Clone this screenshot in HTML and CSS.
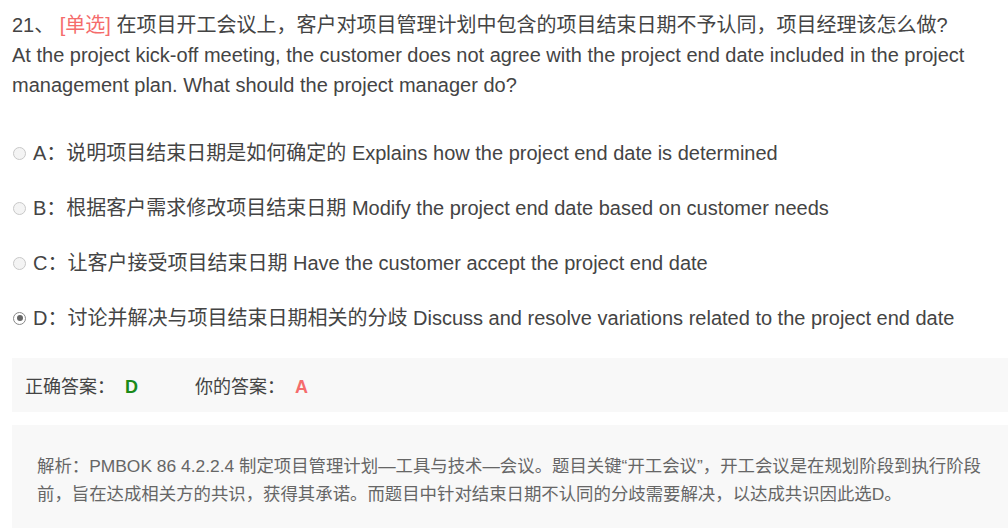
FILE: index.html
```html
<!DOCTYPE html>
<html lang="zh">
<head>
<meta charset="utf-8">
<link rel="stylesheet" href="styles.css">
</head>
<body>
<div class="page">
  <div class="question">
    <span class="num">21、</span> <span class="tag">[单选]</span> 在项目开工会议上，客户对项目管理计划中包含的项目结束日期不予认同，项目经理该怎么做?<br>At the project kick-off meeting, the customer does not agree with the project end date included in the project management plan. What should the project manager do?
  </div>
  <div class="options">
    <label class="option"><span class="radio"></span>A：说明项目结束日期是如何确定的 Explains how the project end date is determined</label>
    <label class="option"><span class="radio"></span>B：根据客户需求修改项目结束日期 Modify the project end date based on customer needs</label>
    <label class="option"><span class="radio"></span>C：让客户接受项目结束日期 Have the customer accept the project end date</label>
    <label class="option"><span class="radio checked"></span>D：讨论并解决与项目结束日期相关的分歧 Discuss and resolve variations related to the project end date</label>
  </div>
  <div class="answer">
    <span class="ans-item">正确答案：<b class="right">D</b></span>
    <span class="ans-item">你的答案：<b class="wrong">A</b></span>
  </div>
  <div class="analysis">
    解析：PMBOK 86 4.2.2.4 制定项目管理计划—工具与技术—会议。题目关键“开工会议”，开工会议是在规划阶段到执行阶段前，旨在达成相关方的共识，获得其承诺。而题目中针对结束日期不认同的分歧需要解决，以达成共识因此选D。
  </div>
</div>
</body>
</html>
```

FILE: styles.css
```css
html, body {
  margin: 0;
  padding: 0;
  background: #fff;
}
body {
  font-family: "Liberation Sans", Arial, "Noto Sans CJK SC", sans-serif;
  color: #444;
}
.page {
  padding: 10px 0 0 12px;
}
.question {
  font-size: 20px;
  line-height: 30px;
  padding-right: 30px;
}
.tag {
  color: #f56c6c;
}
.options {
  display: flex;
  flex-direction: column;
  gap: 25px;
  margin-top: 38px;
}
.option {
  display: flex;
  align-items: center;
  font-size: 20px;
  line-height: 30px;
}
.radio {
  width: 13px;
  height: 13px;
  border: 1px solid #c8c8c8;
  border-radius: 50%;
  background: #f4f4f4;
  margin: 0 7px 0 1px;
  box-sizing: border-box;
  position: relative;
}
.radio.checked {
  border: 1px solid #888;
  background: #fff;
}
.radio.checked::after {
  content: "";
  position: absolute;
  left: 2.5px;
  top: 2.5px;
  width: 6px;
  height: 6px;
  border-radius: 50%;
  background: #666;
}
.answer {
  margin-top: 25px;
  background: #f8f8f8;
  height: 54px;
  display: flex;
  align-items: center;
  gap: 57px;
  padding-left: 13px;
  font-size: 18px;
}
.answer b {
  margin-left: 10px;
}
.right {
  color: #1a8a1a;
}
.wrong {
  color: #f56c6c;
}
.analysis {
  margin-top: 13px;
  background: #f8f8f8;
  padding: 27px 14px 40px 25px;
  font-size: 17.4px;
  line-height: 28px;
  color: #666;
}
```
